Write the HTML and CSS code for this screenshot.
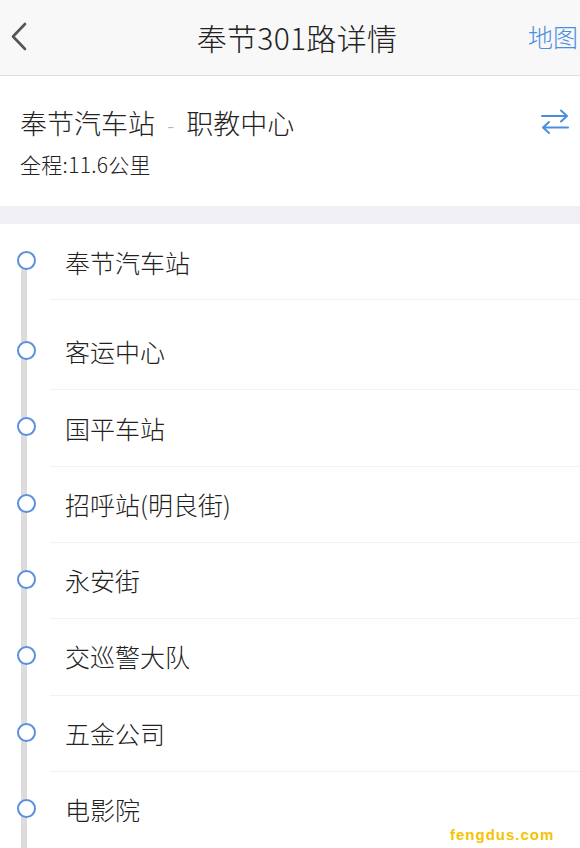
FILE: index.html
```html
<!DOCTYPE html>
<html lang="zh">
<head>
<meta charset="utf-8">
<title>奉节301路详情</title>
<link rel="stylesheet" href="styles.css">
</head>
<body>
<div class="page">
  <header class="topbar">
    <span class="back">
      <svg width="20" height="32" viewBox="0 0 20 32"><polyline points="15,3 3,15.5 15,28" fill="none" stroke="#555" stroke-width="2.6" stroke-linecap="round" stroke-linejoin="round"/></svg>
    </span>
    <h1 class="title">奉节301路详情</h1>
    <span class="map">地图</span>
  </header>

  <section class="info">
    <div class="info-main">
      <div class="route">奉节汽车站<span class="dash">-</span>职教中心</div>
      <div class="distance">全程:11.6公里</div>
    </div>
    <span class="swap">
      <svg width="30" height="28" viewBox="0 0 30 28"><g fill="none" stroke="#4a8ee0" stroke-width="2" stroke-linecap="round" stroke-linejoin="round"><path d="M2 8H27M21 2.5L27 8L21 13.5"/><path d="M28 19.5H3M9 14L3 19.5L9 25"/></g></svg>
    </span>
  </section>

  <div class="band"></div>

  <ul class="stops">
    <li class="stop first h76 t39"><span class="rail"><i class="dot"></i></span><span class="name">奉节汽车站</span></li>
    <li class="stop h90 t52"><span class="rail"><i class="dot"></i></span><span class="name">客运中心</span></li>
    <li class="stop h77 t39"><span class="rail"><i class="dot"></i></span><span class="name">国平车站</span></li>
    <li class="stop h76 t38"><span class="rail"><i class="dot"></i></span><span class="name">招呼站(明良街)</span></li>
    <li class="stop h76 t38"><span class="rail"><i class="dot"></i></span><span class="name">永安街</span></li>
    <li class="stop h77 t38"><span class="rail"><i class="dot"></i></span><span class="name">交巡警大队</span></li>
    <li class="stop h76 t38"><span class="rail"><i class="dot"></i></span><span class="name">五金公司</span></li>
    <li class="stop h77 t38"><span class="rail"><i class="dot"></i></span><span class="name">电影院</span></li>
  </ul>

  <div class="watermark">fengdus.com</div>
</div>
</body>
</html>
```

FILE: styles.css
```css
* { box-sizing: border-box; margin: 0; padding: 0; }
html, body { background: #fff; }
body {
  font-family: "Noto Sans CJK SC", "Noto Sans", sans-serif;
  font-weight: 300;
  color: #222;
  overflow: hidden;
}
.page { position: relative; width: 580px; height: 848px; overflow: hidden; }

.topbar {
  height: 76px;
  background: #f8f8f8;
  border-bottom: 1px solid #dedede;
  display: flex;
  align-items: center;
  justify-content: space-between;
  padding: 0 2px 2px 10px;
}
.back { width: 60px; display: flex; align-items: center; }
.back svg { display: block; }
.title {
  font-size: 30px;
  font-weight: 300;
  color: #222;
  line-height: 1;
  padding-left: 6px;
  letter-spacing: 0.3px;
}
.map {
  width: 60px;
  text-align: right;
  font-size: 25px;
  color: #4a8ee0;
  line-height: 1;
}

.info {
  height: 130px;
  display: flex;
  align-items: flex-start;
  justify-content: space-between;
  padding: 33px 10px 0 20px;
}
.route { font-size: 27px; line-height: 27px; color: #222; }
.dash { color: #b5b5b5; padding: 0 12px; font-size: 22px; }
.distance { font-size: 21px; line-height: 21px; margin-top: 16px; color: #222; letter-spacing: 0.3px; }
.swap { margin-top: -1px; }
.swap svg { display: block; }

.band { height: 18px; background: #efeff4; }

.stops { list-style: none; }
.stop { display: flex; }
.h76 { height: 76px; }
.h77 { height: 77px; }
.h90 { height: 90px; }

.rail {
  width: 50px;
  position: relative;
  display: flex;
  flex-direction: column;
  align-items: center;
  padding-left: 2px;
}
.rail::before {
  content: "";
  position: absolute;
  left: 21px;
  width: 6px;
  top: 0;
  bottom: 0;
  background: #dcdcdc;
}
.first .rail::before { top: 45px; }
.dot {
  position: relative;
  display: block;
  width: 19px;
  height: 19px;
  border: 2px solid #5b8fe0;
  border-radius: 50%;
  background: #fff;
}
.t39 .dot { margin-top: 27px; }
.t52 .dot { margin-top: 41px; }
.t38 .dot { margin-top: 27px; }

.name {
  flex: 1;
  border-bottom: 1px solid #f2f2f2;
  padding-left: 15px;
  font-size: 25px;
  line-height: 25px;
  color: #222;
}
.t39 .name { padding-top: 26px; }
.t52 .name { padding-top: 39px; }
.t38 .name { padding-top: 25px; }

.watermark {
  position: absolute;
  left: 450px;
  top: 826px;
  font-family: "Liberation Sans", Arial, sans-serif;
  font-weight: bold;
  font-size: 15px;
  letter-spacing: 1px;
  color: #f5c300;
}
```
